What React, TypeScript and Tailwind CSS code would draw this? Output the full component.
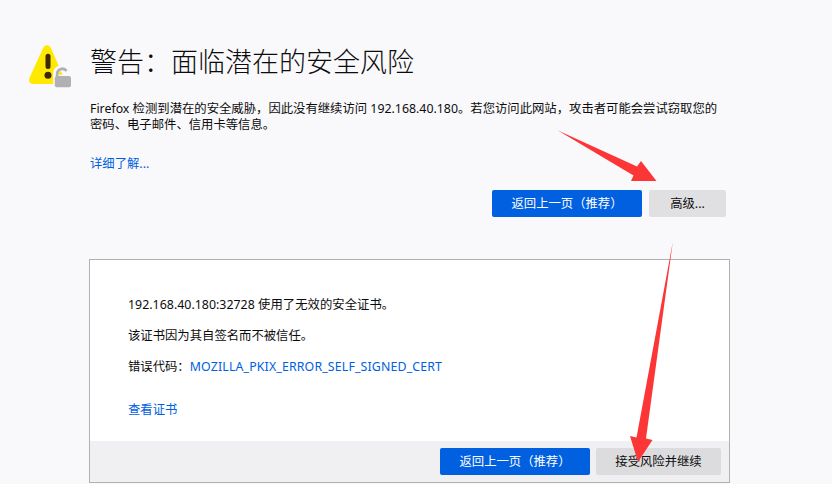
const WarningIcon = () => (
  <svg className="block h-[45px] w-[44px]" viewBox="0 0 44 45" aria-hidden="true">
    <path d="M15 4.2C16 2 17.3 1.2 19 1.2S22 2 23 4.2L35.3 32.5C37 37 35.5 40 31.5 40H5.5C1.5 40 .2 37 1.6 33.5Z" fill="#ffe900" />
    <path d="M20 12.2V22.5" stroke="#3e2800" strokeWidth="5" strokeLinecap="round" />
    <circle cx="20" cy="31.2" r="3.5" fill="#3e2800" />
    <path d="M28 33.5V29.5A5.6 5.6 0 0 1 39.2 29.5V32.5" fill="none" stroke="#f9f9fb" strokeWidth="6" />
    <rect x="25.2" y="30.8" width="18.4" height="13.5" rx="2.5" fill="#f9f9fb" />
    <path d="M29.2 33V30.3A5.2 5.2 0 0 1 38.6 27" fill="none" stroke="#b1b1b3" strokeWidth="2.8" />
    <rect x="26.8" y="32" width="16.2" height="11.3" rx="2" fill="#b1b1b3" />
  </svg>
);

const Button = ({ children, className }: { children: string; className: string }) => (
  <button className={`flex h-[27px] items-center justify-center whitespace-nowrap rounded-[2px] pt-px ${className}`}>
    {children}
  </button>
);

export default function App() {
  return (
    <main
      lang="zh-CN"
      className="relative h-[484px] w-[832px] overflow-hidden bg-[#f9f9fb] font-['Noto_Sans','Noto_Sans_CJK_SC',sans-serif] text-[12.35px] leading-4 text-[#0c0c0d]"
    >
      <header className="flex pl-7 pt-[43px]">
        <div className="w-[62px] shrink-0 pt-px">
          <WarningIcon />
        </div>
        <div>
          <h1 className="h-[58px] whitespace-nowrap font-['Noto_Sans_CJK_SC',sans-serif] text-[27px] font-light leading-9">
            警告：面临潜在的安全风险
          </h1>
          <p className="whitespace-nowrap">
            Firefox 检测到潜在的安全威胁，因此没有继续访问 192.168.40.180。若您访问此网站，攻击者可能会尝试窃取您的
            <br />
            密码、电子邮件、信用卡等信息。
          </p>
          <a className="mt-[23px] block text-[#0060df]">详细了解...</a>
        </div>
      </header>

      <div className="mt-[18px] flex gap-[7px] pl-[492px]">
        <Button className="w-[150px] bg-[#0060df] text-white">返回上一页（推荐）</Button>
        <Button className="w-[77px] bg-[#e0e0e2]">高级...</Button>
      </div>

      <section className="ml-[89px] mt-[42px] flex h-[224px] w-[641px] flex-col border border-[#b1b1b3] bg-white">
        <div className="flex-1 whitespace-nowrap pl-[38px] pt-[37px]">
          <p className="tracking-[0.03px]">192.168.40.180:32728 使用了无效的安全证书。</p>
          <p className="mt-[15px]">该证书因为其自签名而不被信任。</p>
          <p className="mt-[15px]">
            错误代码：<a className="tracking-[0.15px] text-[#0060df]">MOZILLA_PKIX_ERROR_SELF_SIGNED_CERT</a>
          </p>
          <a className="mt-[27px] block text-[#0060df]">查看证书</a>
        </div>
        <div className="flex h-[41px] gap-[6px] bg-[#f0f0f2] pl-[350px] pt-[7px]">
          <Button className="w-[150px] bg-[#0060df] text-white">返回上一页（推荐）</Button>
          <Button className="w-[125px] bg-[#dcdcde]">接受风险并继续</Button>
        </div>
      </section>

      <svg className="pointer-events-none absolute inset-0" width="832" height="484" viewBox="0 0 832 484" fill="#fc3636" aria-hidden="true">
        <path d="M557.5 130.2L637 166.5L641 161L656.5 181L631 181L633.5 175.5Z" />
        <path d="M672.8 242L646 438.5L652.5 440L638 462L630 436L636.5 437.5Z" />
      </svg>
    </main>
  );
}
